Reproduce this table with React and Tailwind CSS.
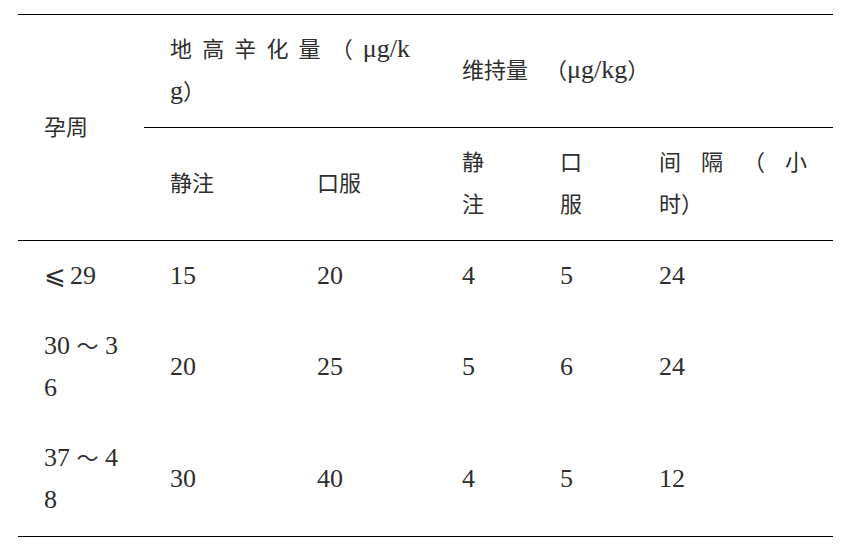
const font = { fontFamily: '"Liberation Serif", "Noto Sans CJK SC", "DejaVu Serif", serif' };

const rows = [
  { week: null, load: ['15', '20'], keep: ['4', '5', '24'] },
  { week: ['30～3', '6'], load: ['20', '25'], keep: ['5', '6', '24'] },
  { week: ['37～4', '8'], load: ['30', '40'], keep: ['4', '5', '12'] },
];

// Latin runs are set larger than the CJK text, as in the source document
function L({ children }) {
  return <span className="text-[26px] leading-[0]">{children}</span>;
}

// a line that fills its cell width, like distributed alignment
function Spread({ children }) {
  return <div className="[text-align:justify] [text-align-last:justify]">{children}</div>;
}

function Week({ lines }) {
  const [a, b] = lines;
  return (
    <>
      <Spread>
        <L>{a.slice(0, 2)}</L>
        {a.slice(2, 3)}
        <L>{a.slice(3)}</L>
      </Spread>
      <div>
        <L>{b}</L>
      </div>
    </>
  );
}

const cell = 'pl-[26px] pr-[26px] py-[14px] align-middle text-left font-normal';

export default function App() {
  return (
    <div className="min-h-screen bg-white pt-[14px] pl-[18px]" style={font}>
      <table className="table-fixed border-collapse w-[815px] text-[22px] leading-[42px] text-[#2e2e2e]">
        <colgroup>
          <col className="w-[126px]" />
          <col className="w-[147px]" />
          <col className="w-[145px]" />
          <col className="w-[98px]" />
          <col className="w-[99px]" />
          <col className="w-[200px]" />
        </colgroup>
        <thead>
          <tr className="border-t border-black">
            <th rowSpan={2} className={`${cell} border-b border-black`}>孕周</th>
            <th colSpan={2} className={`${cell} border-b border-black`}>
              <Spread>
                地高辛化量（<L>μg/k</L>
              </Spread>
              <div>
                <L>g</L>）
              </div>
            </th>
            <th colSpan={3} className={`${cell} border-b border-black`}>
              维持量<span className="ml-[17px]">（</span>
              <L>μg/kg</L>）
            </th>
          </tr>
          <tr className="border-b border-black">
            <th className={cell}>静注</th>
            <th className={cell}>口服</th>
            <th className={cell}>
              <div>静</div>
              <div>注</div>
            </th>
            <th className={cell}>
              <div>口</div>
              <div>服</div>
            </th>
            <th className={cell}>
              <Spread>间隔（小</Spread>
              <div>时）</div>
            </th>
          </tr>
        </thead>
        <tbody>
          {rows.map((r, i) => {
            const c = i === 0 ? `${cell} pt-[15px]` : cell;
            return (
              <tr key={i} className={i === rows.length - 1 ? 'border-b border-black' : ''}>
                <td className={c}>
                  {r.week ? (
                    <Week lines={r.week} />
                  ) : (
                    <div>
                      <span className="inline-block w-[26px] text-[26px] leading-[0] font-['DejaVu_Sans'] font-light">⩽</span>
                      <L>29</L>
                    </div>
                  )}
                </td>
                {r.load.map((v, j) => (
                  <td key={'l' + j} className={c}>
                    <L>{v}</L>
                  </td>
                ))}
                {r.keep.map((v, j) => (
                  <td key={'k' + j} className={c}>
                    <L>{v}</L>
                  </td>
                ))}
              </tr>
            );
          })}
        </tbody>
      </table>
    </div>
  );
}
